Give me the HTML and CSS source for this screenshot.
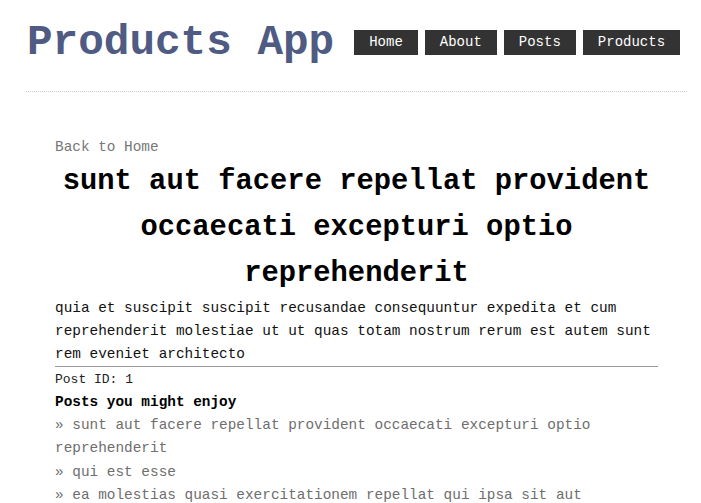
FILE: index.html
```html
<!DOCTYPE html>
<html>
<head>
<meta charset="utf-8">
<link rel="stylesheet" href="styles.css">
</head>
<body>
<div class="page">
  <header class="header">
    <h1 class="logo">Products App</h1>
    <nav class="nav">
      <a class="nav-btn" href="#">Home</a>
      <a class="nav-btn" href="#">About</a>
      <a class="nav-btn" href="#">Posts</a>
      <a class="nav-btn" href="#">Products</a>
    </nav>
  </header>
  <main class="content">
    <a class="back" href="#">Back to Home</a>
    <h2 class="post-title">sunt aut facere repellat provident occaecati excepturi optio reprehenderit</h2>
    <p class="post-body">quia et suscipit suscipit recusandae consequuntur expedita et cum reprehenderit molestiae ut ut quas totam nostrum rerum est autem sunt rem eveniet architecto</p>
    <hr class="divider">
    <div class="post-id">Post ID: 1</div>
    <div class="related-title">Posts you might enjoy</div>
    <ul class="related">
      <li><a href="#">» sunt aut facere repellat provident occaecati excepturi optio reprehenderit</a></li>
      <li><a href="#">» qui est esse</a></li>
      <li><a href="#">» ea molestias quasi exercitationem repellat qui ipsa sit aut</a></li>
    </ul>
  </main>
</div>
</body>
</html>
```

FILE: styles.css
```css
html, body {
  margin: 0;
  padding: 0;
  background: #fff;
}
body {
  font-family: "Courier New", Courier, "Nimbus Mono PS", "Nimbus Mono L", FreeMono, "Liberation Mono", monospace;
  font-size: 14.4px;
  line-height: 1.6;
  color: #111;
}
.page {
  width: 661px;
  margin-left: 26px;
}
.header {
  display: flex;
  align-items: center;
  padding: 18px 0 24px 1px;
  border-bottom: 1px dotted #c8c8c8;
}
.logo {
  margin: 0 20px 0 0;
  font-size: 42.67px;
  line-height: normal;
  font-weight: bold;
  color: #4f5b82;
}
.nav {
  display: flex;
  gap: 7px;
}
.nav-btn {
  display: block;
  background: #333;
  color: #fff;
  text-decoration: none;
  padding: 4px 15px;
  line-height: 17px;
  font-size: 14px;
}
.content {
  width: 603px;
  margin-left: 29px;
  padding-top: 44px;
}
.back {
  display: block;
  color: #777;
  text-decoration: none;
}
.post-title {
  margin: 0;
  font-size: 28.8px;
  line-height: 1.6;
  text-align: center;
  font-weight: bold;
  color: #000;
}
.post-body {
  margin: 0;
  color: #111;
}
.divider {
  margin: 0;
  border: 0;
  border-top: 1px solid #9a9a9a;
  height: 0;
}
.post-id {
  font-size: 13px;
  line-height: 23px;
  padding-top: 1px;
  color: #222;
}
.related-title {
  font-weight: bold;
  color: #000;
}
.related {
  list-style: none;
  margin: 0;
  padding: 0;
}
.related a {
  color: #6e6e6e;
  text-decoration: none;
}
```
